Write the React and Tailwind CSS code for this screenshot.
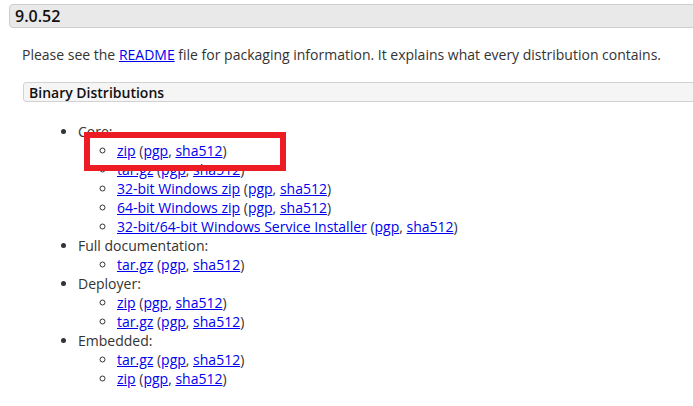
const link = "text-[#0000ee] underline";

function Files({ items }) {
  return (
    <ul className="list-[circle] pl-[39px]">
      {items.map((name, i) => (
        <li key={i}>
          <a href="#" className={link}>{name}</a> (<a href="#" className={link}>pgp</a>, <a href="#" className={link}>sha512</a>)
        </li>
      ))}
    </ul>
  );
}

export default function App() {
  const groups = [
    ["Core:", ["zip", "tar.gz", "32-bit Windows zip", "64-bit Windows zip", "32-bit/64-bit Windows Service Installer"]],
    ["Full documentation:", ["tar.gz"]],
    ["Deployer:", ["zip", "tar.gz"]],
    ["Embedded:", ["tar.gz", "zip"]],
  ];

  return (
    <div className="relative h-[406px] w-[693px] overflow-hidden bg-white font-['Open_Sans',sans-serif] text-[14px] leading-[19px] text-[#333]">
      <div className="ml-[9px] mt-[4px] mr-[-10px] flex h-[24px] items-center rounded-[4px] border border-[#cdcdcd] bg-[#e9e9e9] pl-[5px] text-[16px] font-semibold text-[#111]">
        9.0.52
      </div>

      <div className="pl-[22px]">
        <p className="mt-[17px]">
          Please see the <a href="#" className={link}>README</a> file for packaging information. It explains what every distribution contains.
        </p>

        <div className="ml-[1px] mr-[-10px] mt-[18px] flex h-[20px] items-center rounded-[3px] border border-[#d2d2d2] bg-[#f5f5f5] pl-[5px] font-semibold text-[#111]">
          Binary Distributions
        </div>

        <ul className="ml-[16px] mt-[20px] list-disc pl-[40px]">
          {groups.map(([title, items]) => (
            <li key={title}>
              {title}
              <Files items={items} />
            </li>
          ))}
        </ul>
      </div>

      <div className="absolute left-[84px] top-[132px] h-[39px] w-[202px] border-[6px] border-[#ed1c24]" />
    </div>
  );
}
